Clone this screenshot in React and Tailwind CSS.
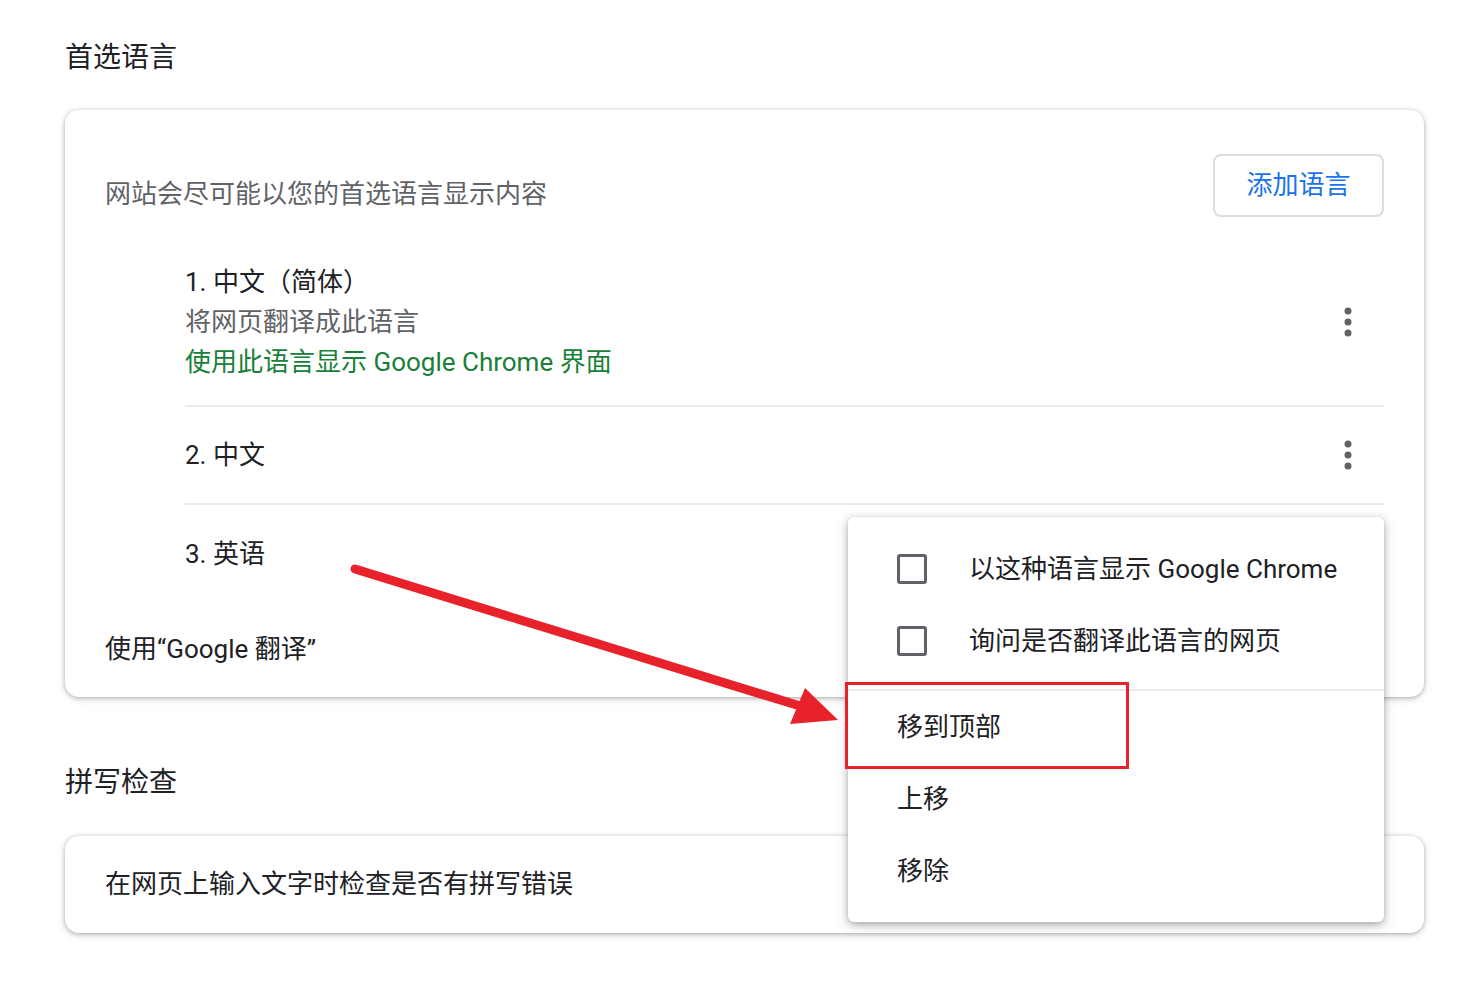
import React from "react";

const font = { fontFamily: 'Roboto, "Noto Sans CJK SC", sans-serif' };

function Kebab() {
  return (
    <svg width="8" height="30" viewBox="0 0 8 30">
      <circle cx="4" cy="4" r="3.5" fill="#5f6368" />
      <circle cx="4" cy="15" r="3.5" fill="#5f6368" />
      <circle cx="4" cy="26" r="3.5" fill="#5f6368" />
    </svg>
  );
}

function Box() {
  return <div className="w-[30px] h-[30px] rounded-[3px] border-[3px] border-[#5f6368]" />;
}

export default function App() {
  return (
    <div className="relative w-[1477px] h-[995px] bg-white text-[#202124] text-[26px]" style={font}>
      <div className="pl-[65px] pr-[53px] pt-[38px]">
        <h2 className="text-[28px] leading-[40px] mb-[32px]">首选语言</h2>
        <div className="rounded-[14px] shadow-[0_1px_4px_rgba(60,64,67,0.35),0_2px_8px_rgba(60,64,67,0.15)] pl-[40px] pr-[40px] pt-[44px] pb-[28px]">
          <div className="flex items-center justify-between">
            <span className="text-[#5f6368] mt-[18px]">网站会尽可能以您的首选语言显示内容</span>
            <button className="w-[171px] h-[63px] rounded-[8px] border-2 border-[#dadce0] text-[#1a73e8]">添加语言</button>
          </div>
          <div className="ml-[80px] mt-[45px]">
            <div className="flex items-center justify-between pb-[23px] border-b-2 border-[#e8eaed] leading-[40px]">
              <div>
                <div>1. 中文（简体）</div>
                <div className="text-[#5f6368]">将网页翻译成此语言</div>
                <div className="text-[#188038]">使用此语言显示 Google Chrome 界面</div>
              </div>
              <div className="mr-[32px]"><Kebab /></div>
            </div>
            <div className="flex items-center justify-between h-[98px] border-b-2 border-[#e8eaed]">
              <span>2. 中文</span>
              <div className="mr-[32px]"><Kebab /></div>
            </div>
            <div className="flex items-center h-[98px]">
              <span>3. 英语</span>
            </div>
          </div>
          <div className="leading-[40px] mt-[26px]">使用“Google 翻译”</div>
        </div>
        <h2 className="text-[28px] leading-[40px] mt-[66px] mb-[33px]">拼写检查</h2>
        <div className="rounded-[14px] shadow-[0_1px_4px_rgba(60,64,67,0.35),0_2px_8px_rgba(60,64,67,0.15)] px-[40px] h-[97px] flex items-center">
          在网页上输入文字时检查是否有拼写错误
        </div>
      </div>

      <div className="absolute left-[848px] top-[517px] w-[536px] h-[405px] bg-white rounded-[6px] shadow-[0_2px_6px_rgba(60,64,67,0.35),0_4px_14px_rgba(60,64,67,0.2)] pt-[16px]">
        <div className="flex items-center gap-[42px] pl-[49px] h-[72px]"><Box />以这种语言显示 Google Chrome</div>
        <div className="flex items-center gap-[42px] pl-[49px] h-[72px]"><Box />询问是否翻译此语言的网页</div>
        <div className="border-t-2 border-[#e8eaed] mt-[12px]" />
        <div className="pl-[49px] h-[72px] flex items-center">移到顶部</div>
        <div className="pl-[49px] h-[72px] flex items-center">上移</div>
        <div className="pl-[49px] h-[72px] flex items-center">移除</div>
      </div>

      <div className="absolute left-[845px] top-[682px] w-[284px] h-[87px] border-[3px] border-[#e8222a]" />
      <svg className="absolute left-0 top-0" width="1477" height="995">
        <line x1="355" y1="569" x2="800" y2="706" stroke="#e8222a" strokeWidth="9" strokeLinecap="round" />
        <polygon points="838,720 790,724 805,688" fill="#e8222a" />
      </svg>
    </div>
  );
}
